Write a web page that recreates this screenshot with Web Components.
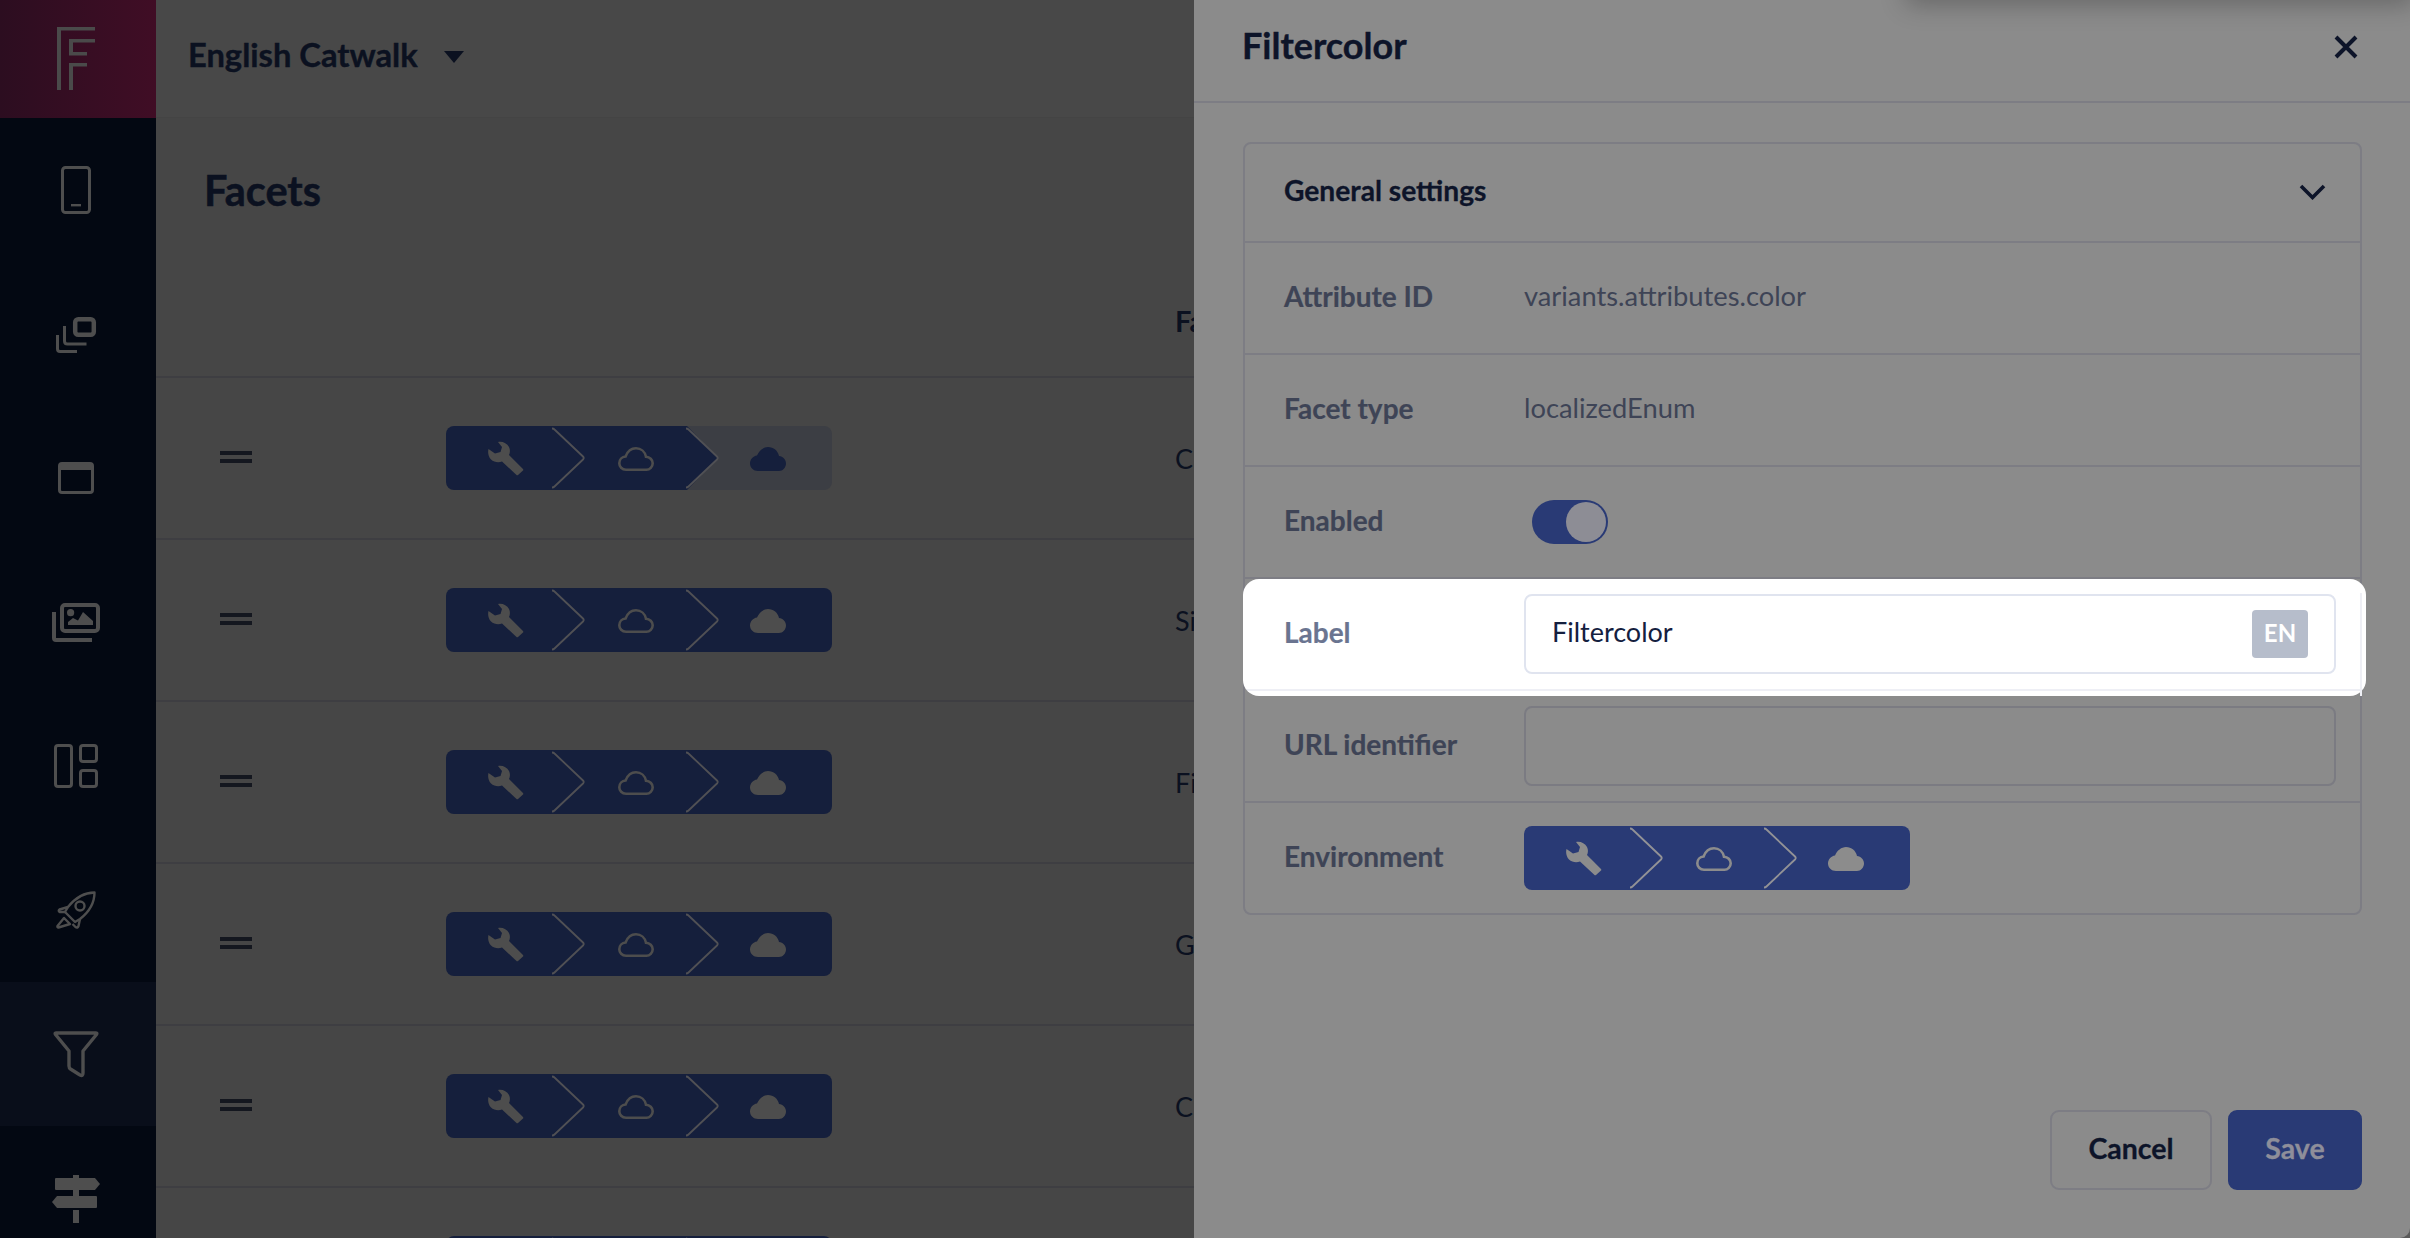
<!DOCTYPE html>
<html lang="en">
<head>
<meta charset="utf-8">
<title>Facets</title>
<style>
  html, body { margin: 0; height: 100%; overflow: hidden; background: #464646; }
  body { font-family: "Lato", "Open Sans", sans-serif; }
</style>
</head>
<body>
<app-shell>
  <side-nav slot="nav">
    <nav-item icon="phone"></nav-item>
    <nav-item icon="cards"></nav-item>
    <nav-item icon="window"></nav-item>
    <nav-item icon="images"></nav-item>
    <nav-item icon="layout"></nav-item>
    <nav-item icon="rocket"></nav-item>
    <nav-item icon="filter" active></nav-item>
    <nav-item icon="signs"></nav-item>
  </side-nav>

  <facet-page slot="main" catalog="English Catwalk" heading="Facets" column="Fa">
    <facet-row name="C" off></facet-row>
    <facet-row name="Si"></facet-row>
    <facet-row name="Fi"></facet-row>
    <facet-row name="G"></facet-row>
    <facet-row name="C"></facet-row>
    <facet-row></facet-row>
  </facet-page>

  <slide-panel slot="panel" heading="Filtercolor">
    <settings-card heading="General settings">
      <setting-row label="Attribute ID" plain>variants.attributes.color</setting-row>
      <setting-row label="Facet type" plain>localizedEnum</setting-row>
      <setting-row label="Enabled"><toggle-switch></toggle-switch></setting-row>
      <setting-row label="Label" highlight><text-box value="Filtercolor" lang-tag="EN" bright></text-box></setting-row>
      <setting-row label="URL identifier"><text-box></text-box></setting-row>
      <setting-row label="Environment" last><env-steps tone="panel"></env-steps></setting-row>
    </settings-card>
    <ui-button slot="actions">Cancel</ui-button>
    <ui-button slot="actions" primary>Save</ui-button>
  </slide-panel>
</app-shell>

<script>
const ICONS = {
  phone: `<rect x="10.5" y="1.5" width="27" height="45" rx="3" fill="none" stroke="currentColor" stroke-width="3"/><rect x="19" y="38" width="10" height="2.4" fill="currentColor"/>`,
  cards: `<rect x="23.2" y="9.2" width="18.6" height="15.6" rx="3" fill="none" stroke="currentColor" stroke-width="4.5"/>
    <path d="M12.5 16v15q0 3 3 3h19" fill="none" stroke="currentColor" stroke-width="3"/>
    <path d="M5.5 25v14q0 2.5 2.5 2.5h17" fill="none" stroke="currentColor" stroke-width="3"/>`,
  window: `<rect x="7.5" y="9.5" width="33" height="29" rx="2.5" fill="none" stroke="currentColor" stroke-width="3"/><rect x="7" y="9" width="34" height="7" fill="currentColor"/>`,
  images: `<rect x="10" y="7" width="36" height="26" rx="3" fill="none" stroke="currentColor" stroke-width="4"/>
    <path d="M2 14v26q0 2 2 2h36" fill="none" stroke="currentColor" stroke-width="4"/>
    <circle cx="18.6" cy="14.7" r="3.6" fill="currentColor"/>
    <path d="M16 27v-3l5-4 5 2.5 5-8.5 10 9v4z" fill="currentColor"/>`,
  layout: `<g fill="none" stroke="currentColor" stroke-width="3"><rect x="3.5" y="3.5" width="16" height="41" rx="2.5"/><rect x="28.5" y="3.5" width="16" height="16" rx="2.5"/><rect x="28.5" y="28.5" width="16" height="16" rx="2.5"/></g>`,
  rocket: `<g fill="none" stroke="currentColor" stroke-width="2.4" stroke-linejoin="round">
    <path d="M42.5 6.5C33 6.5 24 11 16 21l-3 5 10 10 5-3c9-7 14.500-16 14.500-26.500z"/>
    <circle cx="28" cy="20" r="4.500"/>
    <path d="M16 21l-8.500 2.500q-1.500 1 0 2.500l5.500 0"/>
    <path d="M28 33l-1.500 7q-1 2.500-3 1l-3-3"/>
    <path d="M12 32l6 6-11.500 3.500q-1.500 0-1-1.500z"/></g>`,
  filter: `<path d="M4 3h40q1.500 0 .5 1.500L31 21v22q0 3.500-3 2l-9.500-6q-1.500-1-1.500-3V21L3.500 4.500Q2.500 3 4 3z" fill="none" stroke="currentColor" stroke-width="3.400" stroke-linejoin="round"/>`,
  signs: `<g fill="currentColor"><path d="M4 4h39l5 6-5 6H4q-1 0-1-1V5q0-1 1-1z"/><path d="M5 22h39q1 0 1 1v10q0 1-1 1H5l-5-6z"/><rect x="21" y="1" width="6" height="3"/><rect x="21" y="16" width="6" height="6"/><rect x="21" y="36" width="6" height="13"/></g>`,
  wrench: `<path d="M10 1c4-1 9 1 11 5 1.500 3 1 6 0 8l14 14q.6 1 0 1.500L30 34q-1 .6-1.500 0L14 20.500c-4 1.500-8 .5-11-2-2.500-2.500-3.500-6.500-2.500-10.500L7 12.500l5.500-1.500L14 6z" fill="currentColor"/>`,
  cloudLine: `<path d="M8 22.700c-4 0-6.700-3-6.700-6.500 0-3.700 2.700-6.500 6.300-6.700C9.500 4.500 13.500 1.300 18 1.300c5 0 9 3.500 10 8.500 3.700.2 6.700 3 6.700 6.500s-3 6.400-6.200 6.400z" fill="none" stroke="currentColor" stroke-width="2.600"/>`,
  cloudFill: `<path d="M8 24c-4.500 0-8-3.200-8-7.500 0-4 3-7.500 7-8C9 3.500 13.500 0 18 0c5.500 0 10 3.800 11 9 4 .4 7 3.700 7 7.500 0 4-3.300 7.500-7 7.500z" fill="currentColor"/>`,
  x: `<path d="M2 2l20 20M22 2L2 22" fill="none" stroke="currentColor" stroke-width="4"/>`,
  chevronDown: `<path d="M2 2l11.500 11.500L25 2" fill="none" stroke="currentColor" stroke-width="3.600"/>`
};

class AppShell extends HTMLElement {
  constructor() {
    super();
    this.attachShadow({ mode: "open" });
    this.shadowRoot.innerHTML = `
      <style>
        :host { display: grid; grid-template-columns: 156px 1038px 1216px; height: 1238px; overflow: hidden; background: #5a5a5a; }
      </style>
      <slot name="nav"></slot>
      <slot name="main"></slot>
      <slot name="panel"></slot>
    `;
  }
}
customElements.define("app-shell", AppShell);

class SideNav extends HTMLElement {
  constructor() {
    super();
    this.attachShadow({ mode: "open" });
    this.shadowRoot.innerHTML = `
      <style>
        :host { display: flex; flex-direction: column; height: 1238px; background: #030812; overflow: hidden; }
        .logo { flex: none; height: 118px; background: linear-gradient(90deg, #2c0d20, #400d25); display: flex; align-items: center; justify-content: center; padding-right: 4px; box-sizing: border-box; color: #4a4a4a; }
      </style>
      <div class="logo">
        <svg width="38" height="64" viewBox="0 0 38 64" fill="currentColor">
          <path d="M0 0h38v3.500H4V63H0z"/>
          <path d="M12 12h26v3.500H16V25h14v3.500H12z"/>
          <path d="M12 36h18v3.500H16V63h-4z"/>
        </svg>
      </div>
      <slot></slot>
    `;
  }
}
customElements.define("side-nav", SideNav);

class NavItem extends HTMLElement {
  constructor() {
    super();
    this.attachShadow({ mode: "open" });
    this.shadowRoot.innerHTML = `
      <style>
        :host { display: flex; flex: none; height: 144px; align-items: center; justify-content: center; padding-right: 4px; box-sizing: border-box; color: #4e4e4e; }
        :host([active]) { background: #090e1a; }
        svg { display: block; overflow: visible; }
      </style>
      <svg width="48" height="48" viewBox="0 0 48 48">${ICONS[this.getAttribute("icon")]}</svg>
    `;
  }
}
customElements.define("nav-item", NavItem);

class FacetPage extends HTMLElement {
  constructor() {
    super();
    this.attachShadow({ mode: "open" });
    this.shadowRoot.innerHTML = `
      <style>
        :host { display: block; height: 1238px; overflow: hidden; background: #464646; color: #0b1120; }
        .top { height: 118px; box-sizing: border-box; display: flex; align-items: center; gap: 26px; padding: 0 0 8px 32px; background: #484848; font-size: 32.7px; font-weight: 700; -webkit-text-stroke: .4px currentColor; border-bottom: 1px solid #444; }
        .caret { width: 0; height: 0; border: solid transparent; border-width: 12px 10px 0; border-top-color: #0b1120; margin-top: 4px; }
        h1 { margin: 0; height: 144px; box-sizing: border-box; padding-left: 48px; display: flex; align-items: center; font-size: 41.5px; font-weight: 700; -webkit-text-stroke: .5px currentColor; }
        .head { height: 116px; box-sizing: border-box; padding: 0 0 0 1019px; border-bottom: 2px solid #3e3e42; display: flex; align-items: center; font-size: 29px; font-weight: 700; white-space: nowrap; padding-top: 2px; }
      </style>
      <div class="top"><span>${this.getAttribute("catalog")}</span><span class="caret"></span></div>
      <h1>${this.getAttribute("heading")}</h1>
      <div class="head">${this.getAttribute("column")}</div>
      <slot></slot>
    `;
  }
}
customElements.define("facet-page", FacetPage);

class FacetRow extends HTMLElement {
  constructor() {
    super();
    this.attachShadow({ mode: "open" });
    const off = this.hasAttribute("off") ? "off" : "";
    this.shadowRoot.innerHTML = `
      <style>
        :host { display: grid; grid-template-columns: 226px 729px 1fr; align-items: center; height: 162px; box-sizing: border-box; padding-left: 64px; border-bottom: 2px solid #3e3e42; font-size: 27px; color: #0b1120; white-space: nowrap; }
        .handle { width: 32px; height: 12px; box-sizing: border-box; border-top: 4.5px solid #14171f; border-bottom: 4.5px solid #14171f; margin-top: -2px; }
      </style>
      <div class="handle"></div>
      <env-steps tone="page" ${off}></env-steps>
      <div>${this.getAttribute("name") || ""}</div>
    `;
  }
}
customElements.define("facet-row", FacetRow);

class EnvSteps extends HTMLElement {
  constructor() {
    super();
    this.attachShadow({ mode: "open" });
    const chevron = (fill) => `
      <svg class="chev" width="34" height="64" viewBox="0 0 34 64">
        ${fill ? `<path d="M0 0h1L32 32 1 64H0z" fill="var(--bar)"/>` : ""}
        <path d="M0 2.500q1.500 0 2.500 1L31 30.500q1.500 1.500 0 3L2.500 60.500q-1 1-2.500 1" fill="none" stroke="var(--line)" stroke-width="1.800"/>
      </svg>`;
    this.shadowRoot.innerHTML = `
      <style>
        :host { display: grid; grid-template-columns: 106px 134px 146px; width: 386px; height: 64px; border-radius: 8px; overflow: hidden; --bar: #151f3c; --line: #505054; --ink: #4d4d4d; --last-bg: var(--bar); --last-ink: var(--ink); }
        :host([tone="panel"]) { --bar: #293a75; --line: #929296; --ink: #8c8c8c; }
        :host([off]) { --last-bg: #3c3e44; --last-ink: #151f3c; }
        .step { position: relative; background: var(--bar); color: var(--ink); }
        .step:last-child { background: var(--last-bg); color: var(--last-ink); }
        svg { position: absolute; display: block; }
        .chev { left: 0; top: 0; }
        .wrench { left: 42px; top: 15px; }
        .cloud { top: 21px; }
      </style>
      <div class="step"><svg class="wrench" width="36" height="35" viewBox="0 0 36 35">${ICONS.wrench}</svg></div>
      <div class="step">${chevron(false)}<svg class="cloud" style="left:66px" width="36" height="24" viewBox="0 0 36 24">${ICONS.cloudLine}</svg></div>
      <div class="step">${chevron(this.hasAttribute("off"))}<svg class="cloud" style="left:64px" width="36" height="24" viewBox="0 0 36 24">${ICONS.cloudFill}</svg></div>
    `;
  }
}
customElements.define("env-steps", EnvSteps);

class SlidePanel extends HTMLElement {
  constructor() {
    super();
    this.attachShadow({ mode: "open" });
    this.shadowRoot.innerHTML = `
      <style>
        :host { display: flex; flex-direction: column; position: relative; height: 1238px; box-sizing: border-box; overflow: hidden; background: #8b8b8b; border-bottom-right-radius: 10px; color: #0d1429; }
        header { flex: none; height: 103px; box-sizing: border-box; display: flex; align-items: center; justify-content: space-between; padding: 0 52px 8px 48px; border-bottom: 2px solid #7d7d84; }
        h2 { margin: 0 0 3px; font-size: 36px; font-weight: 700; -webkit-text-stroke: .4px currentColor; }
        svg { display: block; }
        .body { padding: 39px 48px 0 49px; }
        .actions { margin-top: auto; display: flex; justify-content: flex-end; gap: 16px; padding: 0 48px 48px 0; }
        .shade { position: absolute; left: 716px; right: 0; top: -20px; height: 20px; box-shadow: 0 0 26px 4px rgba(0,0,0,.28); }
      </style>
      <div class="shade"></div>
      <header>
        <h2>${this.getAttribute("heading")}</h2>
        <svg width="24" height="24" viewBox="0 0 24 24">${ICONS.x}</svg>
      </header>
      <div class="body"><slot></slot></div>
      <div class="actions"><slot name="actions"></slot></div>
    `;
  }
}
customElements.define("slide-panel", SlidePanel);

class SettingsCard extends HTMLElement {
  constructor() {
    super();
    this.attachShadow({ mode: "open" });
    this.shadowRoot.innerHTML = `
      <style>
        :host { display: block; border: 2px solid #7d7d84; border-radius: 8px; }
        .head { height: 99px; box-sizing: border-box; display: flex; align-items: center; justify-content: space-between; padding: 0 34px 0 39px; border-bottom: 2px solid #7d7d84; font-size: 28.2px; font-weight: 700; color: #0d1429; }
        .head span { padding-bottom: 5px; -webkit-text-stroke: .3px currentColor; }
        svg { display: block; margin-top: -2px; }
      </style>
      <div class="head"><span>${this.getAttribute("heading")}</span>
        <svg width="27" height="16" viewBox="0 0 27 16">${ICONS.chevronDown}</svg></div>
      <slot></slot>
    `;
  }
}
customElements.define("settings-card", SettingsCard);

class SettingRow extends HTMLElement {
  constructor() {
    super();
    this.attachShadow({ mode: "open" });
    this.shadowRoot.innerHTML = `
      <style>
        :host { display: grid; grid-template-columns: 240px 1fr; align-items: center; position: relative; height: 112px; box-sizing: border-box; padding: 0 24px 0 39px; border-bottom: 2px solid #7d7d84; font-size: 27.3px; color: #3e4456; }
        :host([last]) { border-bottom: 0; height: 110px; }
        :host([highlight]) { color: #6a7490; border-bottom-color: transparent; z-index: 1; }
        :host([highlight])::before { content: ""; position: absolute; left: -2px; right: -6px; top: 0; bottom: -7px; border-radius: 16px; background: linear-gradient(#eeeff5, #eeeff5) 0 110px / 100% 2px no-repeat, #fff; }
        :host([highlight])::after { content: ""; position: absolute; right: -2px; top: 14px; bottom: -7px; width: 2px; background: #eeeff5; }
        :host([plain]) .value { padding-bottom: 5px; }
        .label, .value { position: relative; z-index: 1; }
        .label { font-size: 28px; font-weight: 700; padding-bottom: 5px; -webkit-text-stroke: .2px currentColor; }
      </style>
      <div class="label">${this.getAttribute("label")}</div>
      <div class="value"><slot></slot></div>
    `;
  }
}
customElements.define("setting-row", SettingRow);

class ToggleSwitch extends HTMLElement {
  constructor() {
    super();
    this.attachShadow({ mode: "open" });
    this.shadowRoot.innerHTML = `
      <style>
        :host { display: flex; justify-content: flex-end; width: 76px; height: 44px; box-sizing: border-box; margin-left: 8px; padding: 2px; border-radius: 22px; background: #293a75; }
        .knob { width: 40px; height: 40px; border-radius: 50%; background: #8d8d95; }
      </style>
      <div class="knob"></div>
    `;
  }
}
customElements.define("toggle-switch", ToggleSwitch);

class TextBox extends HTMLElement {
  constructor() {
    super();
    this.attachShadow({ mode: "open" });
    const tag = this.getAttribute("lang-tag");
    this.shadowRoot.innerHTML = `
      <style>
        :host { display: flex; align-items: center; justify-content: space-between; height: 80px; box-sizing: border-box; padding: 0 26px 0 26px; border: 2px solid #7b7b82; border-radius: 8px; font-size: 27px; }
        :host([bright]) { border-color: #e0e4ef; background: #fff; color: #14203f; }
        .text { padding-bottom: 5px; }
        .tag { display: flex; align-items: center; justify-content: center; width: 56px; height: 48px; box-sizing: border-box; padding-bottom: 3px; border-radius: 4px; background: #b6bdcb; color: #fff; font-size: 24px; font-weight: 700; }
      </style>
      <span class="text">${this.getAttribute("value") || ""}</span>
      ${tag ? `<span class="tag">${tag}</span>` : ""}
    `;
  }
}
customElements.define("text-box", TextBox);

class UiButton extends HTMLElement {
  constructor() {
    super();
    this.attachShadow({ mode: "open" });
    this.shadowRoot.innerHTML = `
      <style>
        :host { display: flex; align-items: center; justify-content: center; height: 80px; width: 162px; box-sizing: border-box; padding-bottom: 5px; border: 2px solid #7d7d84; border-radius: 9px; font-size: 28.5px; font-weight: 700; -webkit-text-stroke: .3px currentColor; color: #0d1429; }
        :host([primary]) { width: 134px; background: #293a75; border-color: #293a75; color: #8e8e9a; }
      </style>
      <slot></slot>
    `;
  }
}
customElements.define("ui-button", UiButton);
</script>
</body>
</html>
